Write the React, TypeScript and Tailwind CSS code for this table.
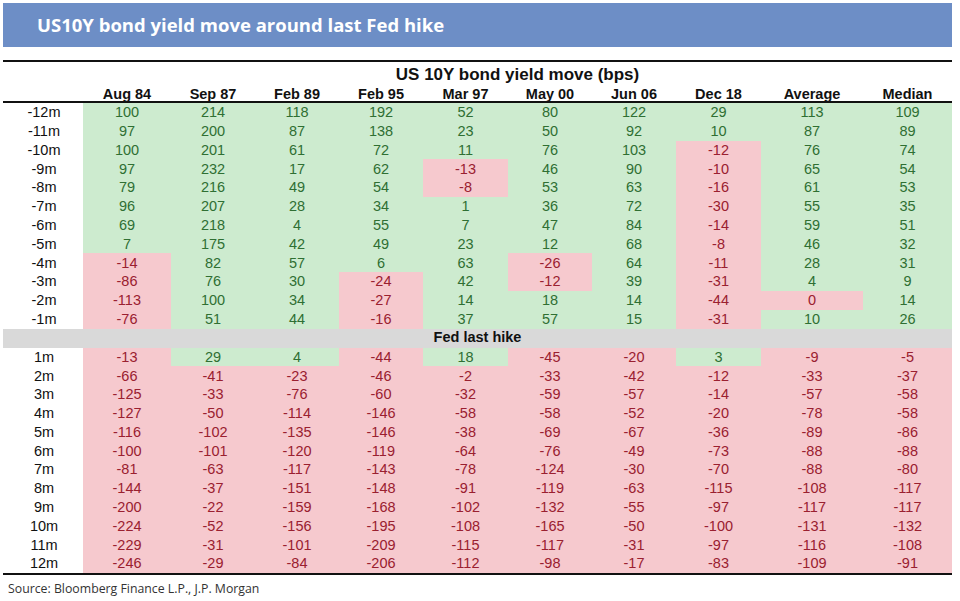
const COLS = ["Aug 84", "Sep 87", "Feb 89", "Feb 95", "Mar 97", "May 00", "Jun 06", "Dec 18", "Average", "Median"];
const WIDTHS = ["w-[88px]", "w-[84px]", "w-[84px]", "w-[84px]", "w-[85px]", "w-[84px]", "w-[84px]", "w-[85px]", "w-[102px]", "w-[89px]"];

const BEFORE: [string, number[]][] = [
  ["-12m", [100, 214, 118, 192, 52, 80, 122, 29, 113, 109]],
  ["-11m", [97, 200, 87, 138, 23, 50, 92, 10, 87, 89]],
  ["-10m", [100, 201, 61, 72, 11, 76, 103, -12, 76, 74]],
  ["-9m", [97, 232, 17, 62, -13, 46, 90, -10, 65, 54]],
  ["-8m", [79, 216, 49, 54, -8, 53, 63, -16, 61, 53]],
  ["-7m", [96, 207, 28, 34, 1, 36, 72, -30, 55, 35]],
  ["-6m", [69, 218, 4, 55, 7, 47, 84, -14, 59, 51]],
  ["-5m", [7, 175, 42, 49, 23, 12, 68, -8, 46, 32]],
  ["-4m", [-14, 82, 57, 6, 63, -26, 64, -11, 28, 31]],
  ["-3m", [-86, 76, 30, -24, 42, -12, 39, -31, 4, 9]],
  ["-2m", [-113, 100, 34, -27, 14, 18, 14, -44, 0, 14]],
  ["-1m", [-76, 51, 44, -16, 37, 57, 15, -31, 10, 26]],
];

const AFTER: [string, number[]][] = [
  ["1m", [-13, 29, 4, -44, 18, -45, -20, 3, -9, -5]],
  ["2m", [-66, -41, -23, -46, -2, -33, -42, -12, -33, -37]],
  ["3m", [-125, -33, -76, -60, -32, -59, -57, -14, -57, -58]],
  ["4m", [-127, -50, -114, -146, -58, -58, -52, -20, -78, -58]],
  ["5m", [-116, -102, -135, -146, -38, -69, -67, -36, -89, -86]],
  ["6m", [-100, -101, -120, -119, -64, -76, -49, -73, -88, -88]],
  ["7m", [-81, -63, -117, -143, -78, -124, -30, -70, -88, -80]],
  ["8m", [-144, -37, -151, -148, -91, -119, -63, -115, -108, -117]],
  ["9m", [-200, -22, -159, -168, -102, -132, -55, -97, -117, -117]],
  ["10m", [-224, -52, -156, -195, -108, -165, -50, -100, -131, -132]],
  ["11m", [-229, -31, -101, -209, -115, -117, -31, -97, -116, -108]],
  ["12m", [-246, -29, -84, -206, -112, -98, -17, -83, -109, -91]],
];

function Row({ label, values }: { label: string; values: number[] }) {
  return (
    <div className="flex h-[18.8px] items-center text-[14.5px] leading-none">
      <div className="w-[80px] pl-[2px] text-center text-[#111]">{label}</div>
      {values.map((v, i) => (
        <div
          key={i}
          className={`${WIDTHS[i]} h-full flex items-center justify-center ${
            v > 0 ? "bg-[#cdebcf] text-[#2f6f33]" : "bg-[#f6c9ce] text-[#9a2030]"
          }`}
        >
          {v}
        </div>
      ))}
    </div>
  );
}

export default function App() {
  return (
    <div className="w-[960px] h-[601px] bg-white pt-[3px] font-['Liberation_Sans',Arial,sans-serif]">
      <div className="ml-[3px] w-[949px] h-[44px] bg-[#6d8ec6] flex items-center pl-[34px]">
        <span className="text-white font-bold text-[18.5px] font-['Open_Sans',sans-serif]">
          US10Y bond yield move around last Fed hike
        </span>
      </div>

      <div className="ml-[3px] w-[949px] mt-[13px] border-t-2 border-[#111]">
        <div className="flex h-[25px] items-center">
          <div className="w-[80px]" />
          <div className="flex-1 text-center font-bold text-[17px] text-[#111]">US 10Y bond yield move (bps)</div>
        </div>
        <div className="flex h-[16px] items-center border-b-2 border-[#111] font-bold text-[14.5px] text-[#111] leading-none">
          <div className="w-[80px]" />
          {COLS.map((c, i) => (
            <div key={c} className={`${WIDTHS[i]} text-center`}>
              {c}
            </div>
          ))}
        </div>

        {BEFORE.map(([l, v]) => (
          <Row key={l} label={l} values={v} />
        ))}

        <div className="h-[19px] bg-[#d9d9d9] flex items-center justify-center font-bold text-[14.5px] text-[#111]">
          Fed last hike
        </div>

        <div className="border-b-2 border-[#111]">
          {AFTER.map(([l, v]) => (
            <Row key={l} label={l} values={v} />
          ))}
        </div>
      </div>

      <div className="pl-[8px] mt-[5px] text-[12.3px] text-[#333] font-['Open_Sans',sans-serif]">
        Source: Bloomberg Finance L.P., J.P. Morgan
      </div>
    </div>
  );
}
